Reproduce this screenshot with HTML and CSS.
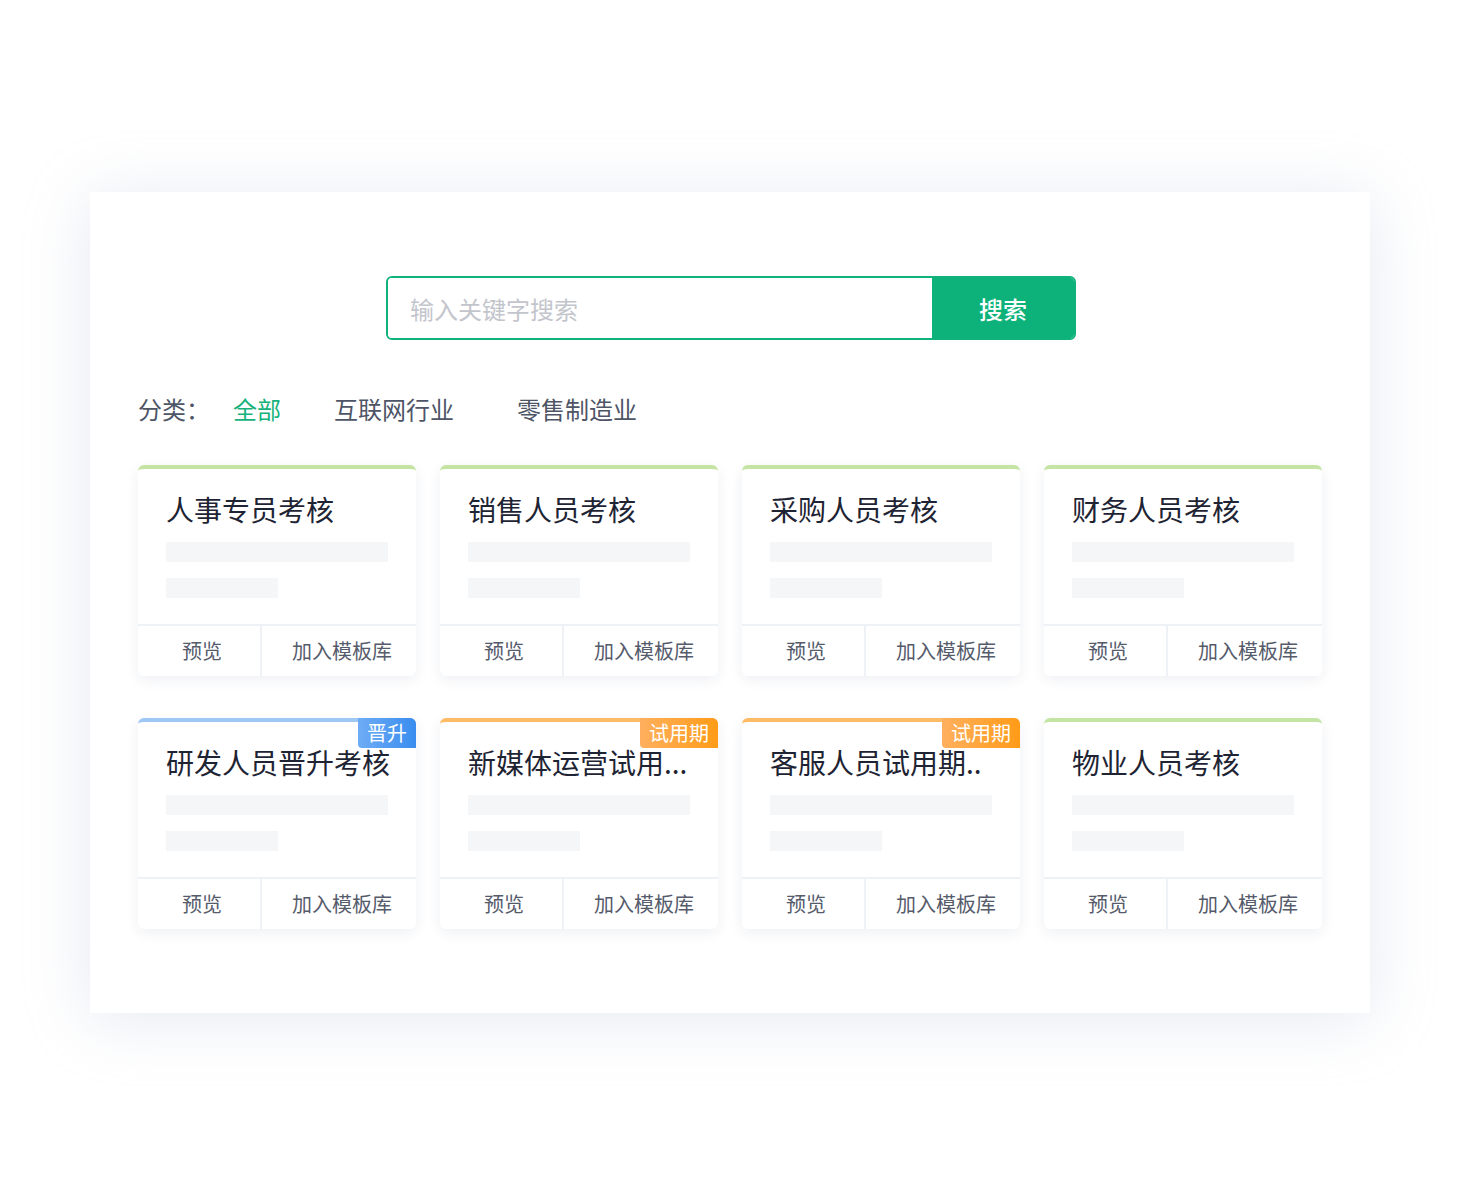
FILE: index.html
```html
<!DOCTYPE html>
<html lang="zh-CN">
<head>
<meta charset="utf-8">
<title>模板库</title>
<link rel="stylesheet" href="styles.css">
</head>
<body>
<div class="panel">
  <div class="search">
    <input class="search-input" type="text" placeholder="输入关键字搜索">
    <button class="search-btn">搜索</button>
  </div>
  <div class="cats">
    <span class="cat-label">分类：</span>
    <span class="cat cat-active">全部</span>
    <span class="cat cat-net">互联网行业</span>
    <span class="cat cat-retail">零售制造业</span>
  </div>
  <div class="grid">
    <div class="card green">
      <div class="card-body">
        <div class="title">人事专员考核</div>
        <div class="bar long"></div>
        <div class="bar short"></div>
      </div>
      <div class="card-foot"><span class="btn-prev">预览</span><span class="btn-add">加入模板库</span></div>
    </div>
    <div class="card green">
      <div class="card-body">
        <div class="title">销售人员考核</div>
        <div class="bar long"></div>
        <div class="bar short"></div>
      </div>
      <div class="card-foot"><span class="btn-prev">预览</span><span class="btn-add">加入模板库</span></div>
    </div>
    <div class="card green">
      <div class="card-body">
        <div class="title">采购人员考核</div>
        <div class="bar long"></div>
        <div class="bar short"></div>
      </div>
      <div class="card-foot"><span class="btn-prev">预览</span><span class="btn-add">加入模板库</span></div>
    </div>
    <div class="card green">
      <div class="card-body">
        <div class="title">财务人员考核</div>
        <div class="bar long"></div>
        <div class="bar short"></div>
      </div>
      <div class="card-foot"><span class="btn-prev">预览</span><span class="btn-add">加入模板库</span></div>
    </div>

    <div class="card blue">
      <span class="badge badge-blue">晋升</span>
      <div class="card-body">
        <div class="title">研发人员晋升考核</div>
        <div class="bar long"></div>
        <div class="bar short"></div>
      </div>
      <div class="card-foot"><span class="btn-prev">预览</span><span class="btn-add">加入模板库</span></div>
    </div>
    <div class="card orange">
      <span class="badge badge-orange">试用期</span>
      <div class="card-body">
        <div class="title">新媒体运营试用...</div>
        <div class="bar long"></div>
        <div class="bar short"></div>
      </div>
      <div class="card-foot"><span class="btn-prev">预览</span><span class="btn-add">加入模板库</span></div>
    </div>
    <div class="card orange">
      <span class="badge badge-orange">试用期</span>
      <div class="card-body">
        <div class="title">客服人员试用期..</div>
        <div class="bar long"></div>
        <div class="bar short"></div>
      </div>
      <div class="card-foot"><span class="btn-prev">预览</span><span class="btn-add">加入模板库</span></div>
    </div>
    <div class="card green">
      <div class="card-body">
        <div class="title">物业人员考核</div>
        <div class="bar long"></div>
        <div class="bar short"></div>
      </div>
      <div class="card-foot"><span class="btn-prev">预览</span><span class="btn-add">加入模板库</span></div>
    </div>
  </div>
</div>
</body>
</html>
```

FILE: styles.css
```css
* { box-sizing: border-box; }
html, body { margin: 0; padding: 0; background: #fff; }
body {
  font-family: "Noto Sans CJK SC", "Noto Sans", sans-serif;
  padding: 192px 0 0 90px;
  height: 1200px;
}
.panel {
  width: 1280px;
  background: #fff;
  box-shadow: 0 6px 60px rgba(175, 186, 212, 0.32);
  padding: 84px 48px 84px 48px;
}
.search {
  width: 690px;
  height: 64px;
  margin: 0 0 0 248px;
  display: flex;
  border: 2px solid #0fb27a;
  border-radius: 6px;
  overflow: hidden;
}
.search-input {
  flex: 1;
  border: none;
  outline: none;
  padding: 0 0 0 22px;
  font-family: inherit;
  font-size: 24px;
  color: #333;
  background: #fff;
}
.search-input::placeholder { color: #c3c5cc; }
.search-btn {
  width: 142px;
  border: none;
  background: #0cb27a;
  color: #fff;
  font-family: inherit;
  font-size: 24px;
  font-weight: 500;
  padding: 0;
}
.cats {
  margin-top: 54px;
  display: flex;
  align-items: center;
  height: 30px;
  font-size: 24px;
  line-height: 30px;
  color: #4e5566;
}
.cat-label { width: 72px; }
.cat-active { color: #17b27c; margin-left: 23px; }
.cat-net { margin-left: 53px; }
.cat-retail { margin-left: 63px; }
.grid {
  margin-top: 41px;
  display: grid;
  grid-template-columns: repeat(4, 278px);
  column-gap: 24px;
  row-gap: 42px;
}
.card {
  position: relative;
  height: 211px;
  background: #fff;
  border-radius: 6px;
  border-top: 4px solid #c3e4a3;
  box-shadow: 0 4px 14px rgba(30, 45, 80, 0.07);
  display: flex;
  flex-direction: column;
}
.card.blue { border-top-color: #9ec8f3; }
.card.orange { border-top-color: #ffbc65; }
.card-body {
  flex: 1;
  padding: 20px 28px 0 28px;
}
.title {
  font-size: 28px;
  line-height: 40px;
  color: #1e2433;
  white-space: nowrap;
}
.bar { height: 20px; background: #f5f6f8; }
.bar.long { width: 222px; margin-top: 13px; }
.bar.short { width: 112px; margin-top: 16px; }
.card-foot {
  height: 52px;
  border-top: 2px solid #eef2f7;
  display: flex;
  font-size: 20px;
  color: #555b6b;
}
.card-foot span {
  display: flex;
  align-items: center;
  justify-content: center;
  padding: 0 0 2px 6px;
}
.btn-prev { width: 124px; border-right: 2px solid #eef2f7; }
.btn-add { flex: 1; }
.badge {
  position: absolute;
  top: -4px;
  right: 0;
  z-index: 1;
  height: 30px;
  line-height: 30px;
  padding: 0 9px;
  font-size: 20px;
  color: #fff;
  border-radius: 0 6px 0 4px;
}
.badge-blue { background: linear-gradient(90deg, #6eacf6, #3a8def); }
.badge-orange { background: linear-gradient(90deg, #ffb05e, #ff9b17); }
```
